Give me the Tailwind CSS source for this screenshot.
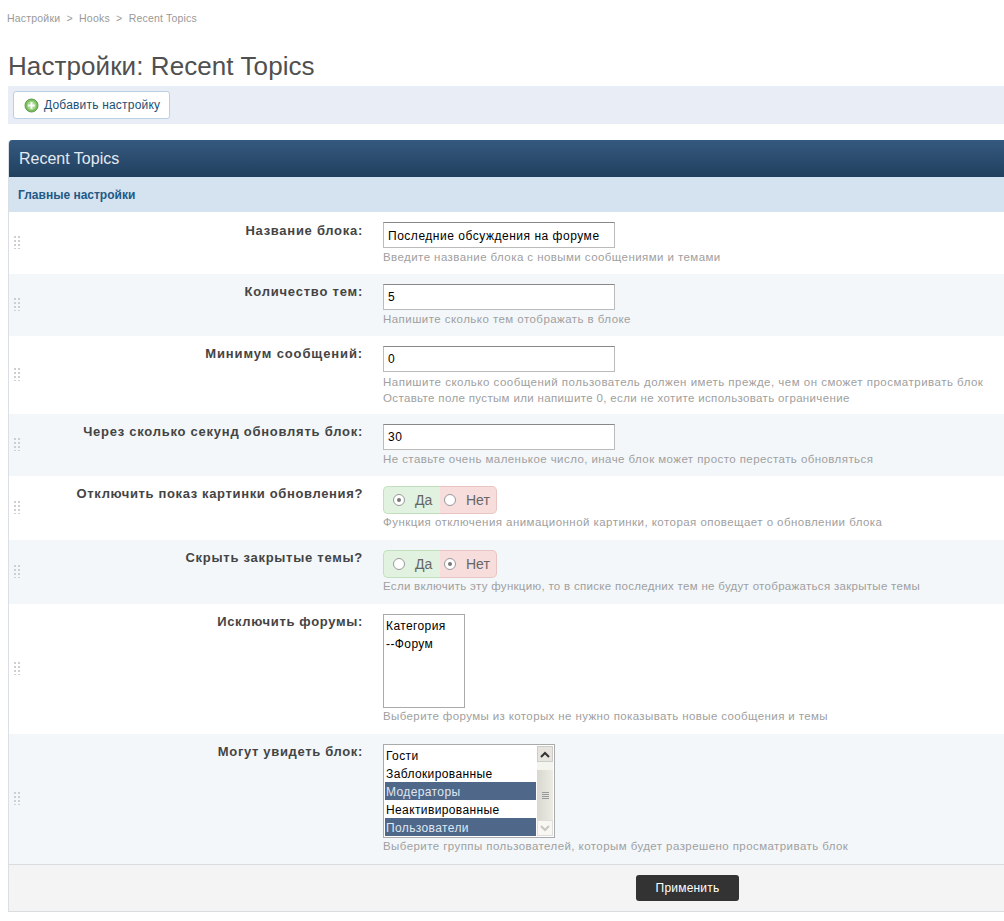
<!DOCTYPE html>
<html lang="ru">
<head>
    <meta charset="UTF-8">
    <title>Настройки: Recent Topics</title>
    <script src="https://cdn.jsdelivr.net/npm/@tailwindcss/browser@4"></script>
</head>
<body class="bg-white font-['Liberation_Sans',Arial,sans-serif] overflow-hidden h-[921px]">
    <div class="pl-[8px] h-[921px]">
        <div class="h-[36px] pt-[12px] text-[10.5px] leading-[13px] tracking-[0.2px] text-[#999] -ml-[1px]">Настройки&nbsp; &gt; &nbsp;Hooks&nbsp; &gt; &nbsp;Recent Topics</div>
        <h1 class="h-[50px] pt-[15px] text-[26px] leading-[30px] tracking-[0.08px] text-[#505050]">Настройки: Recent Topics</h1>
        <div class="h-[38px] bg-[#e9edf5] pl-[5px] pt-[5px]">
            <button class="h-[28px] w-[157px] bg-white border border-[#bcd0e4] rounded-[3px] flex items-center pl-[10px] gap-[5px] text-[12px] tracking-[0.2px] text-[#1d4f74]">
                <svg width="15" height="15" viewBox="0 0 15 15"><circle cx="7.5" cy="7.5" r="6.5" fill="#7cbd5f" stroke="#5d9c48"/><circle cx="7.5" cy="7.5" r="4.5" fill="#a6d88d"/><path d="M7.5 4.2v6.6M4.2 7.5h6.6" stroke="#fff" stroke-width="2"/></svg>
                Добавить настройку
            </button>
        </div>

        <div class="mt-[16px] border-l border-[#d9dfe5] rounded-tl-[4px] overflow-hidden">
            <div class="h-[37px] bg-gradient-to-b from-[#35597f] to-[#21405f] pl-[10px] flex items-center text-[16px] text-[#e4eaf1]">Recent Topics</div>
            <div class="h-[35px] bg-[#d5e2f0] pl-[9px] flex items-center text-[12px] font-bold text-[#225985]">Главные настройки</div>

            <!-- row 1 -->
            <div class="h-[62px] bg-white flex relative">
                <div class="absolute left-[4px] top-[23px] w-[8px] h-[14px] bg-[radial-gradient(#ccd0d4_1px,transparent_1.2px)] bg-[length:4px_4px]"></div>
                <div class="w-[354px] pt-[11px] text-right text-[13px] leading-[16px] font-bold tracking-[0.72px] text-[#444]">Название блока:</div>
                <div class="ml-[20px] pt-[10px]">
                    <div class="w-[232px] h-[26px] border border-[#bbb] border-t-[#888] bg-white pl-[4px] pt-[1px] flex items-center text-[12px] tracking-[0.52px] text-black">Последние обсуждения на форуме</div>
                    <p class="mt-[2px] text-[11.5px] leading-[15px] tracking-[0.43px] text-[#a0a0a0]">Введите название блока с новыми сообщениями и темами</p>
                </div>
            </div>

            <!-- row 2 -->
            <div class="h-[62px] bg-[#f3f7fa] flex relative">
                <div class="absolute left-[4px] top-[23px] w-[8px] h-[14px] bg-[radial-gradient(#ccd0d4_1px,transparent_1.2px)] bg-[length:4px_4px]"></div>
                <div class="w-[354px] pt-[10px] text-right text-[13px] leading-[16px] font-bold tracking-[0.78px] text-[#444]">Количество тем:</div>
                <div class="ml-[20px] pt-[10px]">
                    <div class="w-[232px] h-[26px] border border-[#bbb] border-t-[#888] bg-white pl-[4px] flex items-center text-[12px] tracking-[0.52px] text-black">5</div>
                    <p class="mt-[2px] text-[11.5px] leading-[15px] tracking-[0.45px] text-[#a0a0a0]">Напишите сколько тем отображать в блоке</p>
                </div>
            </div>

            <!-- row 3 -->
            <div class="h-[78px] bg-white flex relative">
                <div class="absolute left-[4px] top-[31px] w-[8px] h-[14px] bg-[radial-gradient(#ccd0d4_1px,transparent_1.2px)] bg-[length:4px_4px]"></div>
                <div class="w-[354px] pt-[10px] text-right text-[13px] leading-[16px] font-bold tracking-[0.88px] text-[#444]">Минимум сообщений:</div>
                <div class="ml-[20px] pt-[10px]">
                    <div class="w-[232px] h-[26px] border border-[#bbb] border-t-[#888] bg-white pl-[4px] flex items-center text-[12px] tracking-[0.52px] text-black">0</div>
                    <p class="mt-[2px] text-[11.5px] leading-[16px] tracking-[0.49px] text-[#a0a0a0]">Напишите сколько сообщений пользователь должен иметь прежде, чем он сможет просматривать блок</p>
                    <p class="text-[11.5px] leading-[16px] tracking-[0.35px] text-[#a0a0a0]">Оставьте поле пустым или напишите 0, если не хотите использовать ограничение</p>
                </div>
            </div>

            <!-- row 4 -->
            <div class="h-[62px] bg-[#f3f7fa] flex relative">
                <div class="absolute left-[4px] top-[23px] w-[8px] h-[14px] bg-[radial-gradient(#ccd0d4_1px,transparent_1.2px)] bg-[length:4px_4px]"></div>
                <div class="w-[354px] pt-[10px] text-right text-[13px] leading-[16px] font-bold tracking-[0.75px] text-[#444]">Через сколько секунд обновлять блок:</div>
                <div class="ml-[20px] pt-[10px]">
                    <div class="w-[232px] h-[26px] border border-[#bbb] border-t-[#888] bg-white pl-[4px] flex items-center text-[12px] tracking-[0.52px] text-black">30</div>
                    <p class="mt-[2px] text-[11.5px] leading-[15px] tracking-[0.43px] text-[#a0a0a0]">Не ставьте очень маленькое число, иначе блок может просто перестать обновляться</p>
                </div>
            </div>

            <!-- row 5 -->
            <div class="h-[64px] bg-white flex relative">
                <div class="absolute left-[4px] top-[24px] w-[8px] h-[14px] bg-[radial-gradient(#ccd0d4_1px,transparent_1.2px)] bg-[length:4px_4px]"></div>
                <div class="w-[354px] pt-[10px] text-right text-[13px] leading-[16px] font-bold tracking-[0.64px] text-[#444]">Отключить показ картинки обновления?</div>
                <div class="ml-[20px] pt-[10px]">
                    <div class="flex h-[28px] w-[114px] text-[14px] text-[#666]">
                        <div class="w-[57px] bg-[#e2f2e0] border border-r-0 border-[#c2e0bd] rounded-l-[5px] flex items-center pl-[9px] gap-[10px]">
                            <span class="w-[12px] h-[12px] rounded-full border border-[#999] bg-white flex items-center justify-center"><span class="w-[4px] h-[4px] rounded-full bg-[#777]"></span></span>Да
                        </div>
                        <div class="w-[57px] bg-[#f7dedd] border border-l-0 border-[#e8c4c3] rounded-r-[5px] flex items-center pl-[4px] gap-[10px]">
                            <span class="w-[12px] h-[12px] rounded-full border border-[#999] bg-white"></span>Нет
                        </div>
                    </div>
                    <p class="text-[11.5px] leading-[15px] mt-[1px] tracking-[0.45px] text-[#a0a0a0]">Функция отключения анимационной картинки, которая оповещает о обновлении блока</p>
                </div>
            </div>

            <!-- row 6 -->
            <div class="h-[64px] bg-[#f3f7fa] flex relative">
                <div class="absolute left-[4px] top-[24px] w-[8px] h-[14px] bg-[radial-gradient(#ccd0d4_1px,transparent_1.2px)] bg-[length:4px_4px]"></div>
                <div class="w-[354px] pt-[10px] text-right text-[13px] leading-[16px] font-bold tracking-[0.72px] text-[#444]">Скрыть закрытые темы?</div>
                <div class="ml-[20px] pt-[10px]">
                    <div class="flex h-[28px] w-[114px] text-[14px] text-[#666]">
                        <div class="w-[57px] bg-[#e2f2e0] border border-r-0 border-[#c2e0bd] rounded-l-[5px] flex items-center pl-[9px] gap-[10px]">
                            <span class="w-[12px] h-[12px] rounded-full border border-[#999] bg-white"></span>Да
                        </div>
                        <div class="w-[57px] bg-[#f7dedd] border border-l-0 border-[#e8c4c3] rounded-r-[5px] flex items-center pl-[4px] gap-[10px]">
                            <span class="w-[12px] h-[12px] rounded-full border border-[#999] bg-white flex items-center justify-center"><span class="w-[4px] h-[4px] rounded-full bg-[#777]"></span></span>Нет
                        </div>
                    </div>
                    <p class="text-[11.5px] leading-[15px] mt-[1px] tracking-[0.30px] text-[#a0a0a0]">Если включить эту функцию, то в списке последних тем не будут отображаться закрытые темы</p>
                </div>
            </div>

            <!-- row 7 -->
            <div class="h-[130px] bg-white flex relative">
                <div class="absolute left-[4px] top-[57px] w-[8px] h-[14px] bg-[radial-gradient(#ccd0d4_1px,transparent_1.2px)] bg-[length:4px_4px]"></div>
                <div class="w-[354px] pt-[10px] text-right text-[13px] leading-[16px] font-bold tracking-[0.66px] text-[#444]">Исключить форумы:</div>
                <div class="ml-[20px] pt-[10px]">
                    <div class="w-[82px] h-[94px] border border-[#aaa] bg-white pl-[2px] pt-[2px] text-[12px] leading-[18px] tracking-[0.4px] text-black">
                        <div>Категория</div>
                        <div>--Форум</div>
                    </div>
                    <p class="mt-[1px] text-[11.5px] leading-[15px] tracking-[0.39px] text-[#a0a0a0]">Выберите форумы из которых не нужно показывать новые сообщения и темы</p>
                </div>
            </div>

            <!-- row 8 -->
            <div class="h-[130px] bg-[#f3f7fa] flex relative">
                <div class="absolute left-[4px] top-[57px] w-[8px] h-[14px] bg-[radial-gradient(#ccd0d4_1px,transparent_1.2px)] bg-[length:4px_4px]"></div>
                <div class="w-[354px] pt-[10px] text-right text-[13px] leading-[16px] font-bold tracking-[0.66px] text-[#444]">Могут увидеть блок:</div>
                <div class="ml-[20px] pt-[10px]">
                    <div class="w-[172px] h-[94px] border border-[#aaa] bg-white p-[1px] flex">
                        <div class="w-[153px] text-[12px] leading-[18px] tracking-[0.38px] text-black">
                            <div class="h-[18px] pl-[1px] pt-[1px]">Гости</div>
                            <div class="h-[18px] pl-[1px] pt-[1px]">Заблокированные</div>
                            <div class="h-[18px] pl-[1px] pt-[1px] bg-[#4f6789] text-[#dfe7f2]">Модераторы</div>
                            <div class="h-[18px] pl-[1px] pt-[1px]">Неактивированные</div>
                            <div class="h-[18px] pl-[1px] pt-[1px] bg-[#4f6789] text-[#dfe7f2]">Пользователи</div>
                        </div>
                        <div class="ml-[1px] w-[16px] flex flex-col">
                            <div class="h-[16px] bg-[#e6e4dc] border border-[#ccc] flex items-center justify-center">
                                <svg width="10" height="7" viewBox="0 0 10 7"><path d="M1 6l4-4 4 4" fill="none" stroke="#333" stroke-width="2"/></svg>
                            </div>
                            <div class="h-[8px] bg-[#f5f5f0]"></div>
                            <div class="flex-1 bg-gradient-to-r from-[#d8d8d0] to-[#ecebe4] flex flex-col items-center justify-center gap-[1px]">
                                <span class="w-[7px] h-px bg-[#999]"></span><span class="w-[7px] h-px bg-[#999]"></span><span class="w-[7px] h-px bg-[#999]"></span><span class="w-[7px] h-px bg-[#999]"></span>
                            </div>
                            <div class="h-[16px] bg-[#f8f7f2] border border-[#ddd] flex items-center justify-center">
                                <svg width="10" height="7" viewBox="0 0 10 7"><path d="M1 1l4 4 4-4" fill="none" stroke="#c8c8c0" stroke-width="2"/></svg>
                            </div>
                        </div>
                    </div>
                    <p class="mt-[1px] text-[11.5px] leading-[15px] tracking-[0.43px] text-[#a0a0a0]">Выберите группы пользователей, которым будет разрешено просматривать блок</p>
                </div>
            </div>

            <!-- footer -->
            <div class="h-[48px] bg-[#f4f4f4] border-y border-[#d8dcdf] flex justify-center pt-[10px] pl-[362px]">
                <button class="w-[103px] h-[26px] bg-[#333] rounded-[3px] text-[12px] tracking-[0.2px] text-white">Применить</button>
            </div>
        </div>
    </div>
</body>
</html>
